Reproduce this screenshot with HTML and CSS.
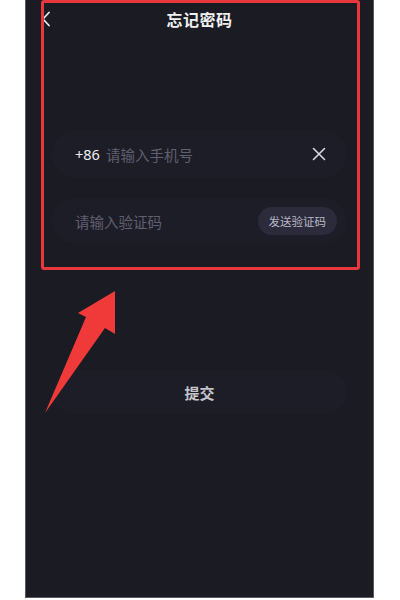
FILE: index.html
```html
<!DOCTYPE html>
<html lang="zh">
<head>
<meta charset="utf-8">
<link rel="stylesheet" href="styles.css">
</head>
<body>
<div class="page">
  <div class="phone">
    <header class="header">
      <svg class="back" width="10" height="16" viewBox="0 0 10 16"><path d="M8 1.5 L2 8 L8 14.5" fill="none" stroke="#e6e6ea" stroke-width="1.8" stroke-linecap="round" stroke-linejoin="round"/></svg>
      <h1 class="title">忘记密码</h1>
    </header>
    <div class="form">
      <div class="field">
        <span class="code">+86</span>
        <span class="placeholder">请输入手机号</span>
        <svg class="clear" width="14" height="14" viewBox="0 0 14 14"><path d="M1.5 1.5 L12.5 12.5 M12.5 1.5 L1.5 12.5" stroke="#d8d8de" stroke-width="1.6" stroke-linecap="round"/></svg>
      </div>
      <div class="field field-code">
        <span class="placeholder">请输入验证码</span>
        <span class="send">发送验证码</span>
      </div>
    </div>
    <div class="submit">提交</div>
  </div>
  <div class="highlight"></div>
  <svg class="arrow" width="400" height="600" viewBox="0 0 400 600"><polygon points="115,291 115,334 105,328 45,413 86,317 78,313" fill="#f03a3a"/></svg>
</div>
</body>
</html>
```
FILE: styles.css
```css
html, body {
  margin: 0;
  padding: 0;
  background: #ffffff;
}
body {
  font-family: "Noto Sans CJK SC", "Noto Sans", sans-serif;
}
.page {
  position: relative;
  width: 400px;
  height: 600px;
}
.phone {
  margin-left: 25px;
  width: 349px;
  height: 598px;
  background: #1b1b24;
  border: 1px solid #5a5a60;
  border-top: none;
  display: flex;
  flex-direction: column;
  box-sizing: border-box;
  padding: 0 26px;
}
.header {
  height: 38px;
  display: flex;
  align-items: center;
  justify-content: center;
  position: relative;
  margin: 0 -26px;
}
.back {
  position: absolute;
  left: 15px;
  top: 11px;
}
.title {
  margin: 0;
  font-size: 16px;
  font-weight: 700;
  color: #f0f0f2;
  letter-spacing: 0.5px;
}
.form {
  margin-top: 92px;
  display: flex;
  flex-direction: column;
  gap: 20px;
}
.field {
  height: 48px;
  border-radius: 24px;
  background: #1d1d27;
  display: flex;
  align-items: center;
  padding: 0 21px 0 23px;
  font-size: 14.5px;
}
.field-code {
  height: 46px;
  padding-right: 10px;
}
.code {
  color: #ececf0;
  margin-right: 6px;
  font-family: "Noto Sans", sans-serif;
}
.placeholder {
  color: #5f5f6e;
  flex: 1;
}
.clear {
  display: block;
}
.send {
  background: #2b2b3b;
  color: #b8b8c6;
  font-size: 11.5px;
  height: 28px;
  line-height: 28px;
  padding: 0 11px;
  border-radius: 14px;
}
.submit {
  margin-top: 126px;
  height: 44px;
  border-radius: 22px;
  background: #1d1d27;
  display: flex;
  align-items: center;
  justify-content: center;
  color: #c4c4ca;
  font-size: 15px;
  font-weight: 700;
}
.highlight {
  position: absolute;
  left: 41px;
  top: 0;
  width: 319px;
  height: 270px;
  box-sizing: border-box;
  border: 3px solid #e8383d;
  border-radius: 3px;
}
.arrow {
  position: absolute;
  left: 0;
  top: 0;
}
```
